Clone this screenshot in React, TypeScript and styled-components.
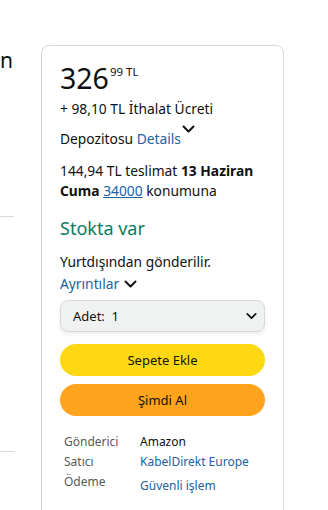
import React from "react";
import styled, { createGlobalStyle } from "styled-components";

const Global = createGlobalStyle`
  html, body { margin: 0; padding: 0; background: #fff; }
  body { font-family: "Noto Sans", "Open Sans", Arial, sans-serif; color: #0F1111; overflow: hidden; }
`;

const Page = styled.div`
  display: flex;
  align-items: flex-start;
  width: 328px;
  height: 510px;
  overflow: hidden;
`;

const Side = styled.div`
  width: 14px;
  flex-shrink: 0;
  display: flex;
  flex-direction: column;
  overflow: hidden;
`;

const SideTitle = styled.div`
  font-size: 21px;
  line-height: 24px;
  margin-top: 48px;
  color: #0F1111;
`;

const Rule = styled.hr<{ $top: number }>`
  border: 0;
  border-top: 1px solid #D5D9D9;
  margin: ${(p) => p.$top}px 0 0;
  width: 14px;
`;

const Card = styled.div`
  margin: 45px 0 0 27px;
  width: 243px;
  height: 500px;
  box-sizing: border-box;
  border: 1px solid #D5D9D9;
  border-radius: 8px;
  padding: 14px 18px 0 18px;
  display: flex;
  flex-direction: column;
`;

const Price = styled.div`
  display: flex;
  align-items: flex-start;
  line-height: 36px;
`;

const Whole = styled.span`
  font-size: 28.5px;
`;

const Sup = styled.span`
  font-size: 11.5px;
  line-height: 14px;
  margin-top: 5px;
  margin-left: 1px;
`;

const Line = styled.div<{ $mt?: number }>`
  font-size: 13.8px;
  line-height: 20px;
  margin-top: ${(p) => p.$mt ?? 0}px;
`;

const Strong = styled.span`
  font-weight: 700;
`;

const Link = styled.a`
  color: #2162A1;
  text-decoration: none;
`;

const Under = styled.a`
  color: #2162A1;
  text-decoration: underline;
`;

const Chevron = styled.svg<{ $lift?: number; $ml?: number }>`
  height: 8px;
  margin-left: ${(p) => p.$ml ?? 5}px;
  vertical-align: 1px;
  position: relative;
  top: ${(p) => -(p.$lift ?? 0)}px;
`;

const Stock = styled.div`
  color: #067D62;
  font-size: 18px;
  line-height: 24px;
  margin-top: 15px;
`;

const Select = styled.div`
  margin-top: 6px;
  height: 32px;
  box-sizing: border-box;
  background: #F0F2F2;
  border: 1px solid #D5D9D9;
  border-radius: 8px;
  box-shadow: 0 2px 5px rgba(15, 17, 17, 0.08);
  display: flex;
  align-items: center;
  justify-content: space-between;
  padding: 0 7px 0 12px;
  font-size: 13px;
`;

const Button = styled.button<{ $bg: string; $mt: number }>`
  margin-top: ${(p) => p.$mt}px;
  height: 32px;
  width: 100%;
  border: 0;
  border-radius: 16px;
  background: ${(p) => p.$bg};
  font-family: inherit;
  font-size: 13px;
  color: #0F1111;
  padding: 0;
`;

const Info = styled.div`
  margin-top: 16px;
  padding-left: 4px;
  display: grid;
  grid-template-columns: 76px 1fr;
  row-gap: 0;
  font-size: 12px;
  line-height: 20px;
`;

const Label = styled.div`
  color: #565959;
`;

const Value = styled.div<{ $link?: boolean; $mt?: number }>`
  color: ${(p) => (p.$link ? "#2162A1" : "#0F1111")};
  margin-top: ${(p) => p.$mt ?? 0}px;
`;

const Down = ({ lift, w = 13, ml }: { lift?: number; w?: number; ml?: number }) => (
  <Chevron $lift={lift} $ml={ml} viewBox="0 0 13 8" style={{ width: w }}>
    <path d="M1.5 1.5 L6.5 6.5 L11.5 1.5" fill="none" stroke="#0F1111" strokeWidth="2" strokeLinecap="round" strokeLinejoin="round" />
  </Chevron>
);

export default function App() {
  return (
    <Page>
      <Global />
      <Side>
        <SideTitle>n</SideTitle>
        <Rule $top={144} />
        <Rule $top={234} />
      </Side>
      <Card>
        <Price>
          <Whole>326</Whole>
          <Sup>99 TL</Sup>
        </Price>
        <Line $mt={3}>+ 98,10 TL İthalat Ücreti</Line>
        <Line $mt={10}>
          Depozitosu <Link href="#">Details</Link>
          <Down lift={10} ml={1} />
        </Line>
        <Line $mt={12}>
          144,94 TL teslimat <Strong>13 Haziran</Strong> <Strong>Cuma</Strong> <Under href="#">34000</Under> konumuna
        </Line>
        <Stock>Stokta var</Stock>
        <Line $mt={12}>Yurtdışından gönderilir.</Line>
        <Line $mt={2}>
          <Link href="#">Ayrıntılar</Link>
          <Down />
        </Line>
        <Select>
          <span>Adet:&nbsp; 1</span>
          <Down w={11} />
        </Select>
        <Button $bg="#FFD814" $mt={12}>Sepete Ekle</Button>
        <Button $bg="#FFA41C" $mt={8}>Şimdi Al</Button>
        <Info>
          <Label>Gönderici</Label>
          <Value>Amazon</Value>
          <Label>Satıcı</Label>
          <Value $link>KabelDirekt Europe</Value>
          <Label>Ödeme</Label>
          <Value $link $mt={4}>Güvenli işlem</Value>
        </Info>
      </Card>
    </Page>
  );
}
